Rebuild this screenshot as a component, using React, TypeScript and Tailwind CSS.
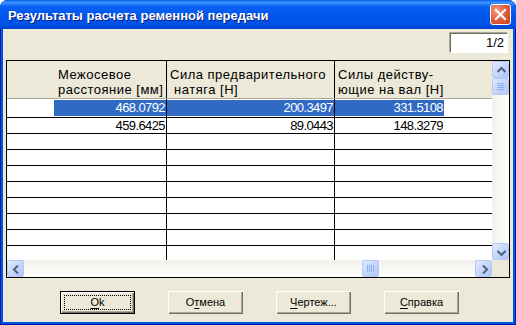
import React from 'react';

type Dir = 'up' | 'down' | 'left' | 'right';

const arrowPaths: Record<Dir, string> = {
  up: 'M4.5 10 L8.5 6 L12.5 10',
  down: 'M4.5 7 L8.5 11 L12.5 7',
  left: 'M10 4.5 L6 8.5 L10 12.5',
  right: 'M7 4.5 L11 8.5 L7 12.5',
};

const ScrollBtn = ({ dir }: { dir: Dir }) => (
  <div className="flex h-[17px] w-[17px] shrink-0 items-center justify-center rounded-[2px] border border-[#B4C8F6] bg-[linear-gradient(135deg,#E3EBFE_0%,#C6D6FB_50%,#B3C7F5_100%)]">
    <svg width="15" height="15" viewBox="0 0 15 15" className="-m-px">
      <path d={arrowPaths[dir]} stroke="#4D6185" strokeWidth="2" fill="none" />
    </svg>
  </div>
);

const Thumb = ({ vertical }: { vertical?: boolean }) => (
  <div
    className={
      'flex h-[17px] w-[17px] shrink-0 items-center justify-center rounded-[2px] border border-[#B4C8F6] bg-[linear-gradient(135deg,#DDE7FE_0%,#C6D6FB_50%,#B6C9F6_100%)] ' +
      (vertical ? 'flex-col gap-[1px]' : 'flex-row gap-[1px]')
    }
  >
    {[0, 1, 2, 3].map((i) => (
      <div
        key={i}
        className={vertical ? 'h-px w-[7px] bg-[#8CB0F8]' : 'h-[7px] w-px bg-[#8CB0F8]'}
      />
    ))}
  </div>
);

const Button = ({
  hot,
  rest,
  pre = '',
  isDefault,
}: {
  pre?: string;
  hot: string;
  rest: string;
  isDefault?: boolean;
}) => (
  <div
    className={
      'relative flex h-[23px] w-[75px] items-center justify-center bg-[#ECE9D8] text-[11px] text-black shadow-[inset_1px_1px_0_#fff,inset_-1px_-1px_0_#716F64,inset_-2px_-2px_0_#ACA899] ' +
      (isDefault ? 'border border-black' : '')
    }
  >
    <span>
      {pre}
      <span className="underline underline-offset-[2px]">{hot}</span>
      {rest}
    </span>
    {isDefault && <div className="absolute inset-[3px] border border-dotted border-black" />}
  </div>
);

const rows = [
  { a: '468.0792', b: '200.3497', c: '331.5108', sel: true },
  { a: '459.6425', b: '89.0443', c: '148.3279', sel: false },
  ...Array.from({ length: 8 }, () => ({ a: '', b: '', c: '', sel: false })),
];

export default function App() {
  return (
    <div className="h-[325px] w-[516px] bg-white font-['Liberation_Sans',Arial,sans-serif]">
      <div className="flex h-full w-full flex-col rounded-t-[8px] bg-[#0054E3] shadow-[inset_1px_0_0_#001EA0,inset_-1px_0_0_#001EA0,inset_0_-1px_0_#001EA0]">
        {/* title bar */}
        <div className="flex h-[29px] shrink-0 items-center justify-between rounded-t-[8px] bg-[linear-gradient(to_bottom,#0A5FEC_0%,#3D95FF_9%,#0A63F4_22%,#0055EA_55%,#0052E6_85%,#0043CF_100%)] pl-[8px] pr-[5px]">
          <span className="pt-[2px] text-[13px] font-bold text-white [text-shadow:1px_1px_0_#0A1E80]">
            Результаты расчета ременной передачи
          </span>
          <div className="flex h-[21px] w-[21px] items-center justify-center rounded-[3px] border border-white bg-[radial-gradient(circle_at_30%_30%,#F0A08A_0%,#E3603D_45%,#C8401D_100%)]">
            <svg width="13" height="13" viewBox="0 0 13 13">
              <path d="M2 2 L11 11 M11 2 L2 11" stroke="white" strokeWidth="2.2" strokeLinecap="square" />
            </svg>
          </div>
        </div>

        {/* body */}
        <div className="mx-[3px] mb-[3px] flex flex-1 flex-col bg-[#ECE9D8]">
          <div className="flex justify-end pr-[5px] pt-[3px]">
            <div className="flex h-[21px] w-[59px] items-center justify-end border border-b-white border-l-[#ACA899] border-r-white border-t-[#ACA899] bg-white pr-[3px] text-[13px] text-black shadow-[inset_1px_1px_0_#716F64]">
              1/2
            </div>
          </div>

          {/* grid */}
          <div className="ml-[3px] mt-[7px] flex h-[218px] w-[504px] flex-col border border-black bg-white">
            <div className="flex h-[199px]">
              <div className="flex flex-1 flex-col overflow-hidden">
                {/* header */}
                <div className="flex h-[38px] shrink-0 border-b border-[#ACA899] bg-[#ECE9D8] text-[13px] leading-[15px] tracking-[0.5px] text-black">
                  <div className="w-[160px] shrink-0 border-r border-black pl-[51px] pt-[6px]">
                    Межосевое
                    <br />
                    расстояние [мм]
                  </div>
                  <div className="w-[168px] shrink-0 whitespace-pre border-r border-black pl-[3px] pt-[6px]">
                    {'Сила предварительного\n натяга [Н]'}
                  </div>
                  <div className="flex-1 pl-[3px] pt-[6px]">
                    Силы действу-
                    <br />
                    ющие на вал [Н]
                  </div>
                </div>
                {rows.map((r, i) => (
                  <div
                    key={i}
                    className={
                      'flex shrink-0 border-b border-black text-[13px] leading-[16px] tracking-[-0.6px] ' +
                      (i === 0 ? 'h-[19px]' : 'h-[16px]')
                    }
                  >
                    <div className="flex w-[160px] shrink-0 items-center justify-end border-r border-black">
                      <div
                        className={
                          'h-[16px] w-[112px] pr-[1px] text-right ' +
                          (r.sel ? 'bg-[#316AC5] text-white' : 'text-black')
                        }
                      >
                        {r.a}
                      </div>
                    </div>
                    <div className="flex w-[168px] shrink-0 items-center border-r border-black">
                      <div
                        className={
                          'h-[16px] w-full pr-[1px] text-right ' +
                          (r.sel ? 'bg-[#316AC5] text-white' : 'text-black')
                        }
                      >
                        {r.b}
                      </div>
                    </div>
                    <div className="flex flex-1 items-center">
                      <div
                        className={
                          'h-[16px] w-[109px] pr-[1px] text-right ' +
                          (r.sel ? 'bg-[#316AC5] text-white' : 'text-black')
                        }
                      >
                        {r.c}
                      </div>
                    </div>
                  </div>
                ))}
              </div>
              {/* vertical scrollbar */}
              <div className="flex w-[17px] shrink-0 flex-col bg-[linear-gradient(to_right,#F3F1EC,#FEFEFB)]">
                <ScrollBtn dir="up" />
                <Thumb vertical />
                <div className="flex-1" />
                <ScrollBtn dir="down" />
              </div>
            </div>
            {/* horizontal scrollbar */}
            <div className="flex h-[17px] shrink-0">
              <div className="flex flex-1 bg-[linear-gradient(to_bottom,#F3F1EC,#FEFEFB)]">
                <ScrollBtn dir="left" />
                <div className="flex-1 pl-[338px]">
                  <Thumb />
                </div>
                <ScrollBtn dir="right" />
              </div>
              <div className="w-[17px] bg-[#ECE9D8]" />
            </div>
          </div>

          {/* buttons */}
          <div className="mt-[13px] flex gap-[33px] pl-[57px]">
            <Button hot="O" rest="k" isDefault />
            <Button pre="О" hot="т" rest="мена" />
            <Button hot="Ч" rest="ертеж..." />
            <Button hot="С" rest="правка" />
          </div>
        </div>
      </div>
    </div>
  );
}
